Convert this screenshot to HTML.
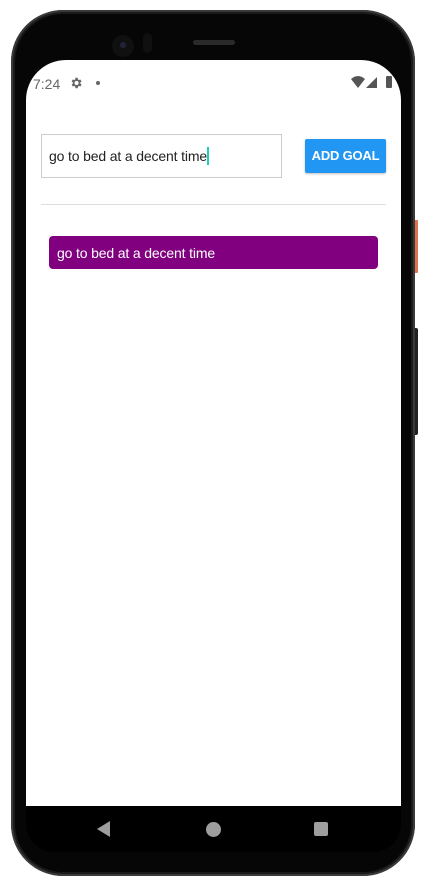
<!DOCTYPE html>
<html><head><style>
body{margin:0;width:421px;height:888px;background:#fff;position:relative;overflow:hidden;font-family:"Liberation Sans",Roboto,sans-serif}
.abs{position:absolute}
</style></head><body>
<div class="abs" style="left:413px;top:220px;width:5px;height:53px;background:#e0714f;border-radius:1px"></div>
<div class="abs" style="left:412px;top:328px;width:6px;height:107px;background:#222;border-radius:2px"></div>
<div class="abs" style="left:11px;top:10px;width:404px;height:866px;background:#1a1a1a;border-radius:52px;box-shadow:inset 0 0 0 2px #3a3a3a"></div>
<div class="abs" style="left:15px;top:14px;width:396px;height:858px;background:#060606;border-radius:48px"></div>
<div class="abs" style="left:26px;top:60px;width:375px;height:792px;background:#000;border-radius:40px 40px 28px 28px;overflow:hidden">
  <div class="abs" style="left:0;top:0;width:375px;height:746px;background:#fff"></div>
  <div class="abs" style="left:7px;top:16px;font-size:14px;color:#666">7:24</div>
  <svg class="abs" style="left:43px;top:16px" width="14" height="14" viewBox="0 0 24 24"><path fill="#666" d="M19.4 13a7.5 7.5 0 000-2l2.1-1.6-2-3.5-2.5 1a7 7 0 00-1.7-1L15 3h-4l-.4 2.9a7 7 0 00-1.7 1l-2.5-1-2 3.5L6.6 11a7.5 7.5 0 000 2l-2.1 1.6 2 3.5 2.5-1a7 7 0 001.7 1L11 21h4l.4-2.9a7 7 0 001.7-1l2.5 1 2-3.5zM13 15.5a3.5 3.5 0 110-7 3.5 3.5 0 010 7z"/></svg>
  <div class="abs" style="left:70px;top:21px;width:4px;height:4px;border-radius:50%;background:#666"></div>
  <svg class="abs" style="left:325px;top:16px" width="14" height="12" viewBox="0 0 14 12"><path fill="#555" d="M0 3Q7-3 14 3L7 12z"/></svg>
  <svg class="abs" style="left:340px;top:17px" width="11" height="11" viewBox="0 0 11 11"><path fill="#555" d="M11 0V11H0z"/></svg>
  <div class="abs" style="left:360px;top:16px;width:6px;height:12px;background:#555;border-radius:1px"></div>

  <div class="abs" style="left:15px;top:74px;width:239px;height:42px;border:1px solid #ccc"></div>
  <div class="abs" style="left:23px;top:88px;font-size:14px;letter-spacing:-0.15px;color:#222">go to bed at a decent time</div>
  <div class="abs" style="left:181px;top:87px;width:2px;height:18px;background:#1ccfb5"></div>
  <div class="abs" style="left:279px;top:79px;width:81px;height:34px;background:#2196f3;border-radius:2px;box-shadow:0 1px 2px rgba(0,0,0,.25);color:#fff;font-size:13px;font-weight:bold;letter-spacing:-0.2px;line-height:34px;text-align:center">ADD GOAL</div>
  <div class="abs" style="left:15px;top:144px;width:345px;height:1px;background:#ddd"></div>
  <div class="abs" style="left:23px;top:176px;width:329px;height:33px;background:#800080;border-radius:4px;color:#fff;font-size:14px;letter-spacing:-0.15px;line-height:34px;padding-left:8px;box-sizing:border-box">go to bed at a decent time</div>

  <svg class="abs" style="left:71px;top:761px" width="14" height="16" viewBox="0 0 14 16"><path fill="#9e9e9e" d="M0 8L13 0V16z"/></svg>
  <div class="abs" style="left:180px;top:762px;width:15px;height:15px;border-radius:50%;background:#9e9e9e"></div>
  <div class="abs" style="left:288px;top:762px;width:14px;height:14px;border-radius:2px;background:#9e9e9e"></div>
</div>
<div class="abs" style="left:112px;top:35px;width:22px;height:22px;border-radius:50%;background:#101010"></div>
<div class="abs" style="left:120px;top:42px;width:6px;height:6px;border-radius:50%;background:#22223a"></div>
<div class="abs" style="left:143px;top:33px;width:9px;height:20px;border-radius:5px;background:#101010"></div>
<div class="abs" style="left:193px;top:40px;width:42px;height:5px;border-radius:3px;background:#2a2a2a"></div>
</body></html>
